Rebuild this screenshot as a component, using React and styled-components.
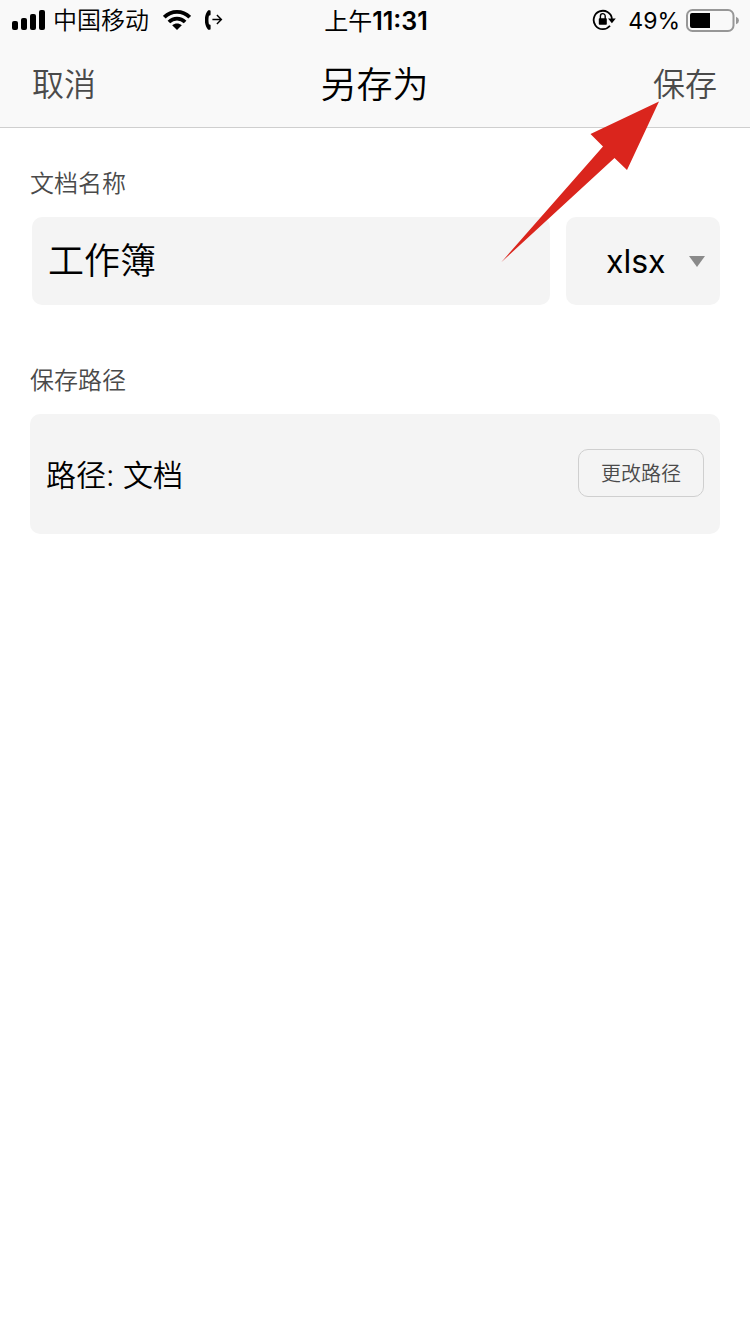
import { useState } from "react";
import styled, { createGlobalStyle } from "styled-components";

const GlobalStyles = createGlobalStyle`
  *, *::before, *::after {
    margin: 0;
    padding: 0;
    box-sizing: border-box;
  }

  body {
    background-color: #fff;
    color: #000;
    font-family: Inter, "Noto Sans CJK SC", sans-serif;
    font-weight: 350;
  }

  button, input, select {
    font-family: inherit;
    font-weight: inherit;
    color: inherit;
    border: none;
    background: none;
  }
`;

const Page = styled.div`
  position: relative;
  min-height: 100vh;
`;

const Header = styled.header`
  background-color: #f9f9f9;
  border-bottom: 1px solid #cfcfcf;
`;

const StatusBar = styled.div`
  display: grid;
  grid-template-columns: 1fr auto 1fr;
  align-items: center;
  height: 40px;
  padding: 0 10px 0 12px;
  font-size: 24px;
  line-height: 36px;
`;

const StatusGroup = styled.div`
  display: flex;
  align-items: center;
  justify-content: ${(props) => props.$justify || "flex-start"};
  gap: ${(props) => props.$gap};
`;

const Carrier = styled.span`
  padding-top: 2px;
`;

const Percent = styled.span`
  padding-top: 2px;
  font-size: 23px;
  font-weight: 400;
`;

const Time = styled.time`
  padding-top: 2px;
  font-size: 25px;
  font-weight: 600;

  & span {
    font-size: 24px;
    font-weight: 400;
  }
`;

const NavBar = styled.nav`
  display: grid;
  grid-template-columns: 1fr auto 1fr;
  align-items: center;
  height: 87px;
  padding: 2px 33px 0 32px;
`;

const NavButton = styled.button`
  justify-self: ${(props) => props.$side};
  font-size: 32px;
  line-height: 48px;
  color: #4a4a4a;
  cursor: pointer;
`;

const Title = styled.h1`
  font-size: 36px;
  line-height: 48px;
  font-weight: 350;
`;

const Form = styled.form`
  display: flex;
  flex-direction: column;
  gap: 58px;
  padding: 38px 30px;
`;

const Field = styled.div`
  display: flex;
  flex-direction: column;
  gap: 15px;
`;

const Label = styled.label`
  font-size: 24px;
  line-height: 36px;
  color: #4a4a4a;
`;

const FileRow = styled.div`
  display: flex;
  gap: 16px;
  padding-left: 2px;
`;

const NameInput = styled.input`
  flex: 1;
  min-width: 0;
  height: 88px;
  padding: 0 16px 6px;
  border-radius: 10px;
  background-color: #f4f4f4;
  font-size: 36px;
`;

const SelectBox = styled.div`
  position: relative;
  width: 154px;
`;

const TypeSelect = styled.select`
  appearance: none;
  width: 100%;
  height: 88px;
  padding-left: 40px;
  border-radius: 10px;
  background-color: #f4f4f4;
  font-size: 32px;
  font-weight: 400;
`;

const Caret = styled.svg`
  position: absolute;
  top: 39px;
  right: 15px;
  pointer-events: none;
`;

const PathBox = styled.div`
  display: flex;
  align-items: center;
  justify-content: space-between;
  height: 120px;
  padding: 0 16px 2px;
  border-radius: 10px;
  background-color: #f4f4f4;
`;

const PathText = styled.output`
  padding-top: 4px;
  font-size: 30px;
  line-height: 48px;
`;

const PathButton = styled.button`
  height: 48px;
  padding: 0 22px 2px;
  border: 1px solid #cfcfcf;
  border-radius: 10px;
  font-size: 20px;
  color: #4a4a4a;
  cursor: pointer;
`;

const Pointer = styled.svg`
  position: absolute;
  top: 101px;
  right: 90px;
  pointer-events: none;
`;

function SignalIcon() {
  return (
    <svg width="34" height="20" viewBox="0 0 34 20">
      <rect x="0" y="11" width="6" height="9" rx="2" />
      <rect x="9" y="8" width="6" height="12" rx="2" />
      <rect x="18" y="4" width="6" height="16" rx="2" />
      <rect x="27" y="0" width="6" height="20" rx="2" />
    </svg>
  );
}

function WifiIcon() {
  return (
    <svg width="28" height="20" viewBox="0 0 28 20">
      <g fill="none" stroke="#000" strokeWidth="3.8">
        <path d="M1.3 7.2C8.4 0.2 19.6 0.2 26.7 7.2" />
        <path d="M5.9 12C10.5 7.6 17.5 7.6 22.1 12" />
      </g>
      <path d="M9.2 15.3C12 13 16 13 18.8 15.3L14 20Z" />
    </svg>
  );
}

function CallIcon() {
  return (
    <svg width="18" height="20" viewBox="0 0 18 20">
      <path d="M3.2 0.2L4.8 0.2Q5.6 0.3 5.6 1.2L5.6 4.4Q5.5 5.4 4.6 5.5L3.9 5.7Q3 10 3.9 14.3L4.6 14.5Q5.5 14.6 5.6 15.6L5.6 18.8Q5.6 19.7 4.8 19.8L3.2 19.8C-1.3 15 -1.3 5 3.2 0.2Z" />
      <path
        d="M7.4 9.5H16.4M11.9 5L16.4 9.5L11.9 14"
        fill="none"
        stroke="#000"
        strokeWidth="1.4"
      />
    </svg>
  );
}

function RotationLockIcon() {
  return (
    <svg width="24" height="22" viewBox="0 0 24 22">
      <path
        d="M18 16.8A9.2 9.2 0 1 1 20 9.8"
        fill="none"
        stroke="#000"
        strokeWidth="1.8"
      />
      <path d="M16 9.6H23.8L19.9 14.2Z" />
      <rect x="6.8" y="9.2" width="8" height="6.6" rx="0.8" />
      <path
        d="M8.4 10V7.2A2.4 2.6 0 0 1 13.2 7.2V10"
        fill="none"
        stroke="#000"
        strokeWidth="1.4"
      />
    </svg>
  );
}

function BatteryIcon() {
  return (
    <svg width="54" height="24" viewBox="0 0 54 24">
      <rect
        x="1"
        y="2"
        width="46.5"
        height="21"
        rx="5.5"
        fill="none"
        stroke="#979797"
        strokeWidth="2"
      />
      <path d="M6 5H24V20H6Q4 20 4 18V7Q4 5 6 5Z" />
      <path d="M50 8.7Q53 9.9 53 12.5T50 16.3Z" fill="#979797" />
    </svg>
  );
}

function App() {
  const [name, setName] = useState("工作簿");
  const [type, setType] = useState("xlsx");

  return (
    <>
      <GlobalStyles />
      <Page>
        <Header>
          <StatusBar>
            <StatusGroup $gap="14px">
              <StatusGroup $gap="7px">
                <SignalIcon />
                <Carrier>中国移动</Carrier>
              </StatusGroup>
              <WifiIcon />
              <CallIcon />
            </StatusGroup>
            <Time>
              <span>上午</span>11:31
            </Time>
            <StatusGroup $gap="12px" $justify="flex-end">
              <RotationLockIcon />
              <StatusGroup $gap="6px">
                <Percent>49%</Percent>
                <BatteryIcon />
              </StatusGroup>
            </StatusGroup>
          </StatusBar>
          <NavBar>
            <NavButton type="button" $side="start">
              取消
            </NavButton>
            <Title>另存为</Title>
            <NavButton type="submit" form="save-form" $side="end">
              保存
            </NavButton>
          </NavBar>
        </Header>

        <Form id="save-form" onSubmit={(e) => e.preventDefault()}>
          <Field>
            <Label htmlFor="name">文档名称</Label>
            <FileRow>
              <NameInput
                id="name"
                type="text"
                value={name}
                onChange={(e) => setName(e.target.value)}
              />
              <SelectBox>
                <TypeSelect
                  aria-label="xlsx"
                  value={type}
                  onChange={(e) => setType(e.target.value)}
                >
                  <option value="xlsx">xlsx</option>
                </TypeSelect>
                <Caret width="16" height="11" viewBox="0 0 16 11">
                  <path d="M0 0H16L8 11Z" fill="#8a8a8a" />
                </Caret>
              </SelectBox>
            </FileRow>
          </Field>

          <Field>
            <Label htmlFor="path">保存路径</Label>
            <PathBox>
              <PathText id="path">路径: 文档</PathText>
              <PathButton type="button">更改路径</PathButton>
            </PathBox>
          </Field>
        </Form>

        <Pointer width="160" height="162" viewBox="0 0 160 162">
          <path
            d="M159 0.5L90.5 33L103 45.5L1.5 161L114.5 57L127 69Z"
            fill="#da251d"
          />
        </Pointer>
      </Page>
    </>
  );
}

export default App;
